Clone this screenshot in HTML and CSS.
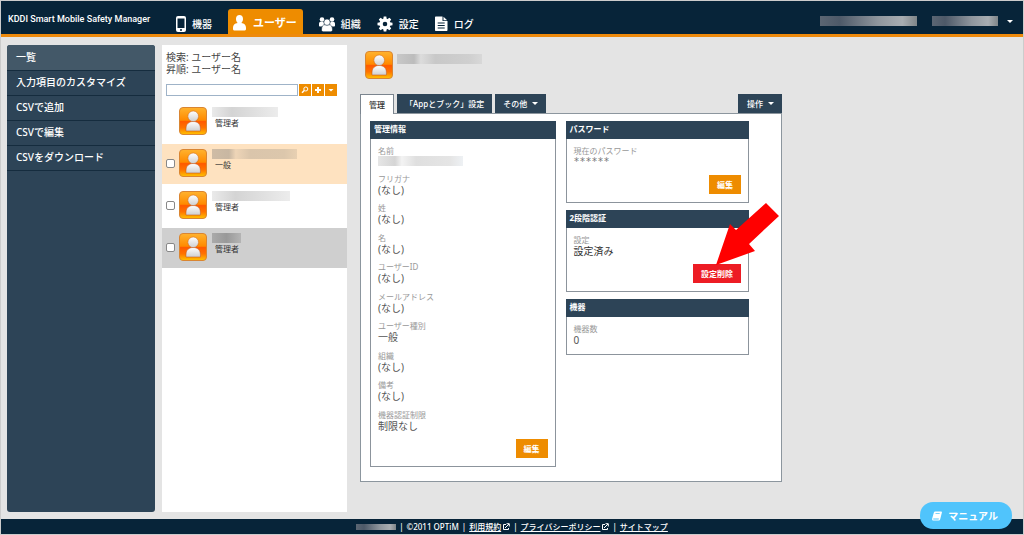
FILE: index.html
```html
<!DOCTYPE html>
<html lang="ja">
<head>
<meta charset="utf-8">
<meta name="viewport" content="width=device-width, initial-scale=1">
<title>KDDI Smart Mobile Safety Manager</title>
<link rel="stylesheet" href="styles.css">
</head>
<body>
<svg class="defs" aria-hidden="true">
  <defs>
    <linearGradient id="orange" x1="0" y1="0" x2="0" y2="1">
      <stop offset="0" stop-color="#ffb32e"/><stop offset=".47" stop-color="#ff8a00"/>
      <stop offset=".52" stop-color="#ff5a00"/><stop offset=".75" stop-color="#ff7200"/><stop offset="1" stop-color="#ffc400"/>
    </linearGradient>
    <linearGradient id="silver" x1="0" y1="0" x2="0" y2="1">
      <stop offset="0" stop-color="#fff"/><stop offset="1" stop-color="#cfcfcf"/>
    </linearGradient>
    <symbol id="avatar" viewBox="0 0 28 28">
      <rect x=".5" y=".5" width="27" height="27" rx="3.5" fill="url(#orange)" stroke="#d98532"/>
      <path d="M7 24v-2.500c0-4.500 3-7 7.200-7s7.200 2.500 7.200 7V24z" fill="url(#silver)" stroke="#b9521c" stroke-width=".5"/>
      <circle cx="14.200" cy="9.300" r="5.300" fill="url(#silver)" stroke="#c9641c" stroke-width=".5"/>
    </symbol>
  </defs>
</svg>
<div class="page">
  <header class="header">
    <h1 class="brand">KDDI Smart Mobile Safety Manager</h1>
    <nav class="nav">
      <a class="nav-item" href="#"><svg class="icon-phone" viewBox="0 0 10 16"><path fill="#fff" fill-rule="evenodd" d="M2 0h6a2 2 0 0 1 2 2v12a2 2 0 0 1-2 2H2a2 2 0 0 1-2-2V2a2 2 0 0 1 2-2zM1.500 2.500v9.500h7V2.500zM5 13a1 1 0 1 0 0 2a1 1 0 0 0 0-2z"/></svg>機器</a>
      <a class="nav-item active" href="#"><svg class="icon-user" viewBox="0 0 13 16"><path fill="#fff" d="M6.500 0C8.700 0 10 1.700 10 3.900c0 1.700-.7 3.200-1.700 4C11.500 8.300 13 10 13 12.800V14c0 1-.8 1.500-2 1.500H2c-1.200 0-2-.5-2-1.500v-1.200C0 10 1.500 8.300 4.700 7.900C3.700 7.100 3 5.600 3 3.900C3 1.700 4.300 0 6.500 0z"/></svg>ユーザー</a>
      <a class="nav-item" href="#"><svg class="icon-square" viewBox="0 0 16 16"><g fill="#fff"><circle cx="3" cy="3.500" r="2.300"/><circle cx="13" cy="3.500" r="2.300"/><path d="M0 9.500V8c0-1.500.6-2.200 2-2.200h2.500L6 9l-2.500 1.500H1.200C.4 10.500 0 10.200 0 9.500zM16 9.500V8c0-1.500-.6-2.200-2-2.200h-2.500L10 9l2.500 1.500h2.300c.8 0 1.200-.3 1.200-1z"/></g><g fill="#fff" stroke="#072439" stroke-width=".6"><path d="M2.500 13.800c0-3 1.200-5.200 3.500-5.200h4c2.300 0 3.500 2.200 3.500 5.200c0 1.300-.8 2-2 2h-7c-1.200 0-2-.7-2-2z"/><circle cx="8" cy="6.200" r="3.200"/></g></svg>組織</a>
      <a class="nav-item" href="#"><svg class="icon-square" viewBox="0 0 16 16"><g fill="#fff"><path id="tooth" d="M6.700.5h2.600l.5 3H6.200zM6.200 12.500h3.600l-.5 3H6.700z"/><use href="#tooth" transform="rotate(45 8 8)"/><use href="#tooth" transform="rotate(90 8 8)"/><use href="#tooth" transform="rotate(135 8 8)"/><path fill-rule="evenodd" d="M8 2.500a5.500 5.500 0 1 0 0 11a5.500 5.500 0 0 0 0-11zm0 3.200a2.300 2.300 0 1 1 0 4.600a2.300 2.300 0 0 1 0-4.600z"/></g></svg>設定</a>
      <a class="nav-item" href="#"><svg class="icon-doc" viewBox="0 0 13 15"><path fill="#fff" fill-rule="evenodd" d="M1 .5h6.500V5h5v9c0 .6-.4 1-1 1H1c-.6 0-1-.4-1-1V1.500C0 .9.400.5 1 .5zM8.500.8l3.700 3.400H8.500zM2.700 6.500v1h7v-1zM2.700 9v1h7V9zM2.700 11.500v1h7v-1z"/></svg>ログ</a>
    </nav>
    <div class="account">
      <span class="mask mask-dark mask-company"></span>
      <button class="account-menu" type="button" aria-label="アカウント"><span class="mask mask-dark mask-login"></span><span class="caret"></span></button>
    </div>
  </header>

  <div class="body">
    <nav class="sidebar">
      <a class="side-item selected" href="#">一覧</a>
      <a class="side-item" href="#">入力項目のカスタマイズ</a>
      <a class="side-item" href="#">CSVで追加</a>
      <a class="side-item" href="#">CSVで編集</a>
      <a class="side-item" href="#">CSVをダウンロード</a>
    </nav>

    <section class="users">
      <div class="criteria"><div>検索: ユーザー名</div><div>昇順: ユーザー名</div></div>
      <form class="search">
        <input class="search-box" type="text" aria-label="検索">
        <button class="tool" type="button" aria-label="検索する"><svg viewBox="0 0 12 12"><circle cx="6.800" cy="5" r="2" fill="none" stroke="#fff"/><path d="M5.300 6.500L3 8.800" stroke="#fff" stroke-width="1.500"/></svg></button>
        <button class="tool" type="button" aria-label="追加"><svg viewBox="0 0 12 12"><path d="M3 6h6M6 3v6" stroke="#fff" stroke-width="2"/></svg></button>
        <button class="tool" type="button" aria-label="メニュー"><svg viewBox="0 0 12 12"><path d="M3.500 5h5L6 7.500z" fill="#fff"/></svg></button>
      </form>
      <ul class="user-list">
        <li class="user"><span class="pick"></span><svg class="avatar"><use href="#avatar"/></svg><div class="who"><span class="mask mask-a"></span><span class="role">管理者</span></div></li>
        <li class="user current"><span class="pick"><input class="check" type="checkbox" aria-label="一般"></span><svg class="avatar"><use href="#avatar"/></svg><div class="who"><span class="mask mask-b"></span><span class="role">一般</span></div></li>
        <li class="user"><span class="pick"><input class="check" type="checkbox" aria-label="管理者"></span><svg class="avatar"><use href="#avatar"/></svg><div class="who"><span class="mask mask-c"></span><span class="role">管理者</span></div></li>
        <li class="user disabled"><span class="pick"><input class="check" type="checkbox" aria-label="管理者"></span><svg class="avatar"><use href="#avatar"/></svg><div class="who"><span class="mask mask-d"></span><span class="role">管理者</span></div></li>
      </ul>
    </section>

    <main class="detail">
      <div class="detail-head"><svg class="avatar"><use href="#avatar"/></svg><span class="mask mask-title"></span></div>
      <div class="tabs">
        <button class="tab tab-on" type="button">管理</button>
        <button class="tab" type="button">「Appとブック」設定</button>
        <button class="tab" type="button">その他<span class="caret"></span></button>
        <button class="tab tab-action" type="button">操作<span class="caret"></span></button>
      </div>
      <div class="panel">
        <section class="card">
          <h2 class="card-title">管理情報</h2>
          <div class="card-body">
            <dl class="fields fields-long">
              <div><dt>名前</dt><dd><span class="mask mask-name"></span></dd></div>
              <div><dt>フリガナ</dt><dd>(なし)</dd></div>
              <div><dt>姓</dt><dd>(なし)</dd></div>
              <div><dt>名</dt><dd>(なし)</dd></div>
              <div><dt>ユーザーID</dt><dd>(なし)</dd></div>
              <div><dt>メールアドレス</dt><dd>(なし)</dd></div>
              <div><dt>ユーザー種別</dt><dd>一般</dd></div>
              <div><dt>組織</dt><dd>(なし)</dd></div>
              <div><dt>備考</dt><dd>(なし)</dd></div>
              <div><dt>機器認証制限</dt><dd>制限なし</dd></div>
            </dl>
            <button class="btn" type="button">編集</button>
          </div>
        </section>
        <div class="column">
          <section class="card">
            <h2 class="card-title">パスワード</h2>
            <div class="card-body">
              <dl class="fields"><div><dt>現在のパスワード</dt><dd class="stars">******</dd></div></dl>
              <button class="btn" type="button">編集</button>
            </div>
          </section>
          <section class="card">
            <h2 class="card-title">2段階認証</h2>
            <div class="card-body">
              <dl class="fields"><div><dt>設定</dt><dd class="strong">設定済み</dd></div></dl>
              <button class="btn btn-danger" type="button">設定削除</button>
            </div>
            <svg class="arrow" viewBox="0 0 64 64" aria-hidden="true"><path fill="#f00" d="M1 63L15 22L21 28L51 1L64 14L34 42L40 49z"/></svg>
          </section>
          <section class="card">
            <h2 class="card-title">機器</h2>
            <div class="card-body">
              <dl class="fields"><div><dt>機器数</dt><dd>0</dd></div></dl>
            </div>
          </section>
        </div>
      </div>
    </main>
  </div>

  <footer class="footer">
    <span class="mask mask-dark mask-foot"></span><span>|</span><span>©2011 OPTiM</span><span>|</span>
    <a class="foot-link" href="#">利用規約<svg class="ext" viewBox="0 0 8 8"><path d="M4 1.500H1.500v5h5V5M3 5l4-4M4.500.7h2.800v2.800" fill="none" stroke="#fff"/></svg></a><span>|</span>
    <a class="foot-link" href="#">プライバシーポリシー<svg class="ext" viewBox="0 0 8 8"><path d="M4 1.500H1.500v5h5V5M3 5l4-4M4.500.7h2.800v2.800" fill="none" stroke="#fff"/></svg></a><span>|</span>
    <a class="foot-link" href="#">サイトマップ</a>
  </footer>
</div>
<a class="manual" href="#"><svg class="book" viewBox="0 0 10 10"><path fill="#fff" fill-rule="evenodd" d="M3.200.5h6c.6 0 .9.400.7 1L8.200 8.300c-.2.800-.7 1.200-1.400 1.200H1.500C.3 9.500-.1 8.600.2 7.600L1.800 1.700C2 .9 2.500.5 3.200.5zM3.600 2.300l-.2.700h4.200l.2-.7zM1.300 7.500c-.2.600 0 1 .5 1h4.800l.3-1z"/></svg>マニュアル</a>
</body>
</html>
```
FILE: styles.css
```css
* { box-sizing: border-box; }
body {
  margin: 0;
  background: #e4e4e4;
  color: #444;
  font-family: "Noto Sans", "Noto Sans CJK JP", sans-serif;
  font-size: 10px;
  line-height: 12px;
}
a { color: inherit; text-decoration: none; }
button { border: 0; margin: 0; padding: 0; font: inherit; color: inherit; background: none; }
ul, dl, dd, h1, h2 { margin: 0; padding: 0; list-style: none; font-size: inherit; }
svg { display: block; flex: none; }
.defs { position: absolute; width: 0; height: 0; }

.page { display: flex; flex-direction: column; min-height: 100vh; border: 1px solid #ccc; }

/* header */
.header {
  display: flex;
  align-items: flex-end;
  height: 36px;
  padding: 0 10px 0 7px;
  background: #072439;
  border-bottom: 3px solid #ee8a0c;
  color: #fff;
}
.brand { flex: none; width: 168px; padding-bottom: 9px; font-family: Roboto, "Noto Sans", sans-serif; font-size: 9px; font-weight: 500; white-space: nowrap; }
.nav { display: flex; gap: 16px; }
.nav-item { display: flex; align-items: center; gap: 6px; height: 25px; padding-top: 4px; font-weight: 500; white-space: nowrap; }
.nav-item.active { gap: 7px; padding: 3px 6px 0 5px; border-radius: 3px 3px 0 0; background: #ee8c00; font-size: 11px; font-weight: 700; }
.icon-phone { width: 10px; height: 16px; }
.icon-user { width: 13px; height: 16px; }
.icon-square { width: 16px; height: 16px; }
.icon-doc { width: 13px; height: 15px; }
.account { display: flex; align-items: center; gap: 15px; margin-left: auto; padding-bottom: 8px; }
.account-menu { display: flex; align-items: center; gap: 9px; }
.caret { border: 3px solid transparent; border-top-color: #fff; border-bottom: 0; }

/* obscured names */
.mask { display: block; height: 10px; background: linear-gradient(90deg, #eaeaea, #d4d4d4 30%, #dedede 60%, #ececec); }
.mask-dark { background: linear-gradient(90deg, #5b6673, #4d5968 20%, #8f969d 60%, #a8adb1 85%, #7f8588); }
.mask-company { width: 97px; }
.mask-login { width: 66px; }
.mask-a { width: 66px; }
.mask-b { width: 85px; background: linear-gradient(90deg, #cfbca5, #c8b7a2 20%, #eed5b7 28%, #dac5ab 45%, #dcc7ac 85%, #e8d0b2); }
.mask-c { width: 78px; }
.mask-d { width: 29px; background: linear-gradient(90deg, #aaa, #999 50%, #b4b4b4); }
.mask-title { width: 85px; background: linear-gradient(90deg, #c8c8c8, #bcbcbc 20%, #dcdcdc 28%, #c8c8c8 45%, #cfcfcf 85%, #d8d8d8); }
.mask-name { width: 85px; background: linear-gradient(90deg, #e6e6e6, #d5d5d5 20%, #f3f3f3 28%, #dfdfdf 45%, #e5e5e5 85%, #eef1f4); }
.mask-foot { width: 40px; height: 6px; }

/* columns */
.body { display: flex; flex: 1; align-items: stretch; padding: 8px 6px 7px; }
.sidebar { flex: none; width: 148px; border-radius: 3px; overflow: hidden; background: #2d4457; color: #fff; }
.side-item { display: block; height: 25px; padding: 5px 9px; border-bottom: 1px solid #152c3e; font-weight: 500; }
.side-item.selected { height: 26px; padding-top: 6px; background: #435868; }

.users { flex: none; width: 185px; margin-left: 7px; background: #fff; }
.criteria { padding: 6px 4px 9px; }
.search { display: flex; gap: 1px; padding: 0 4px; }
.search-box { width: 132px; height: 12px; padding: 0 2px; border: 1px solid #9fb3c8; border-radius: 0; background: #fff; font: inherit; }
.tool { width: 12px; height: 12px; background: #ee8c00; }
.user-list { display: flex; flex-direction: column; gap: 2px; margin-top: 6px; }
.user { display: flex; align-items: flex-start; height: 40px; padding: 5px 4px 0; }
.user.current { background: #fee2c0; }
.user.disabled { background: #cfcfcf; }
.pick { width: 13px; padding-top: 10px; }
.check { display: block; appearance: none; width: 9px; height: 9px; margin: 0; border: 1px solid #888; border-radius: 2px; background: #fff; }
.avatar { width: 28px; height: 28px; }
.who { padding-left: 5px; }
.role { display: block; padding-left: 3px; font-size: 8px; color: #333; }

.detail { flex: 0 1 422px; margin-left: 13px; min-width: 0; }
.detail-head { display: flex; gap: 4px; padding: 6px 5px 15px; }
.detail-head .mask { margin-top: 3px; }
.tabs { display: flex; gap: 3px; }
.tab { display: flex; align-items: center; gap: 5px; height: 19px; padding: 0 8px; background: #2d4457; color: #fff; font-size: 8px; font-weight: 500; white-space: nowrap; }
.tab-on { height: 20px; margin-bottom: -1px; position: relative; background: #fff; color: #333; border: 1px solid #7b858f; border-bottom: 0; }
.tab-action { margin-left: auto; padding: 0 8px 0 9px; }
.panel { display: flex; align-items: flex-start; gap: 10px; padding: 7px 32px 14px 9px; border: 1px solid #8c969e; background: #fff; }
.panel > * { flex: 1; min-width: 0; }
.column { display: flex; flex-direction: column; gap: 7px; }
.card { position: relative; border: 1px solid #8c949c; border-top: 0; }
.card-title { height: 18px; margin: 0 -1px; padding: 2px 4px; background: #2d4457; color: #fff; font-size: 8px; font-weight: 700; }
.card-body { display: flex; flex-direction: column; padding: 7px 7px 8px; }
.fields-long { display: flex; flex-direction: column; justify-content: space-between; min-height: 286px; }
.fields dt { font-size: 8px; line-height: 10px; color: #999; }
.fields dd { color: #555; line-height: 12px; }
.fields .strong { color: #333; }
.fields .stars { font-family: "DejaVu Sans Mono", monospace; color: #777; }
.btn { align-self: flex-end; height: 19px; margin-top: 7px; padding: 0 8px; background: #ee8c00; color: #fff; font-size: 8px; font-weight: 700; }
.btn-danger { background: #ed1c24; }
.arrow { position: absolute; right: -31px; top: -8px; width: 64px; height: 64px; }

/* footer */
.footer { display: flex; align-items: center; justify-content: center; gap: 3px; height: 15px; background: #072439; color: #fff; font-size: 8px; font-weight: 500; white-space: nowrap; }
.foot-link { display: flex; align-items: center; text-decoration: underline; }
.ext { width: 8px; height: 8px; margin-left: 1px; }

.manual {
  position: fixed;
  right: 12px;
  bottom: 6px;
  display: flex;
  align-items: center;
  gap: 6px;
  height: 27px;
  padding: 0 14px 0 12px;
  border-radius: 13px;
  background: #50c4fc;
  color: #fff;
  font-weight: 700;
}
.book { width: 10px; height: 10px; }
```
